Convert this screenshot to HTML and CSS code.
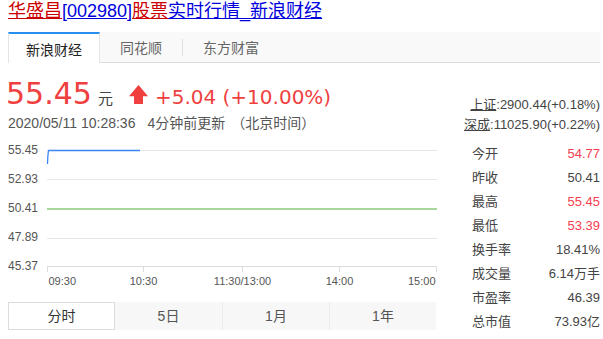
FILE: index.html
```html
<!DOCTYPE html>
<html lang="zh-CN">
<head>
<meta charset="utf-8">
<title>华盛昌[002980]股票实时行情_新浪财经</title>
<link rel="stylesheet" href="styles.css">
</head>
<body>
<h1 class="title"><a class="t-red" href="#">华盛昌</a><a class="t-blue" href="#">[002980]</a><a class="t-red" href="#">股票</a><a class="t-blue" href="#">实时行情_新浪财经</a></h1>

<nav class="src-tabs">
  <span class="src-tab active">新浪财经</span>
  <span class="src-tab">同花顺</span>
  <span class="src-sep"></span>
  <span class="src-tab">东方财富</span>
</nav>

<div class="main">
  <section class="left">
    <div class="price-row">
      <span class="price">55.45</span>
      <span class="unit">元</span>
      <svg class="arrow" width="19" height="19" viewBox="0 0 19 19"><path d="M9.5 0 L19 11.2 L14 11.2 L14 19 L5 19 L5 11.2 L0 11.2 Z" fill="#f03f3f"/></svg>
      <span class="change">+5.04 (+10.00%)</span>
    </div>
    <div class="time-row">
      <span>2020/05/11 10:28:36</span><span class="ago">4分钟前更新</span><span class="zone">（北京时间）</span>
    </div>

    <svg class="chart" width="429" height="155" viewBox="0 0 429 155">
      <g stroke="#e8e8e8" stroke-width="1">
        <line x1="39" y1="13.5" x2="429" y2="13.5"/>
        <line x1="39" y1="42.5" x2="429" y2="42.5"/>
        <line x1="39" y1="101.5" x2="429" y2="101.5"/>
      </g>
      <line x1="39" y1="72" x2="429" y2="72" stroke="#a8d89c" stroke-width="2"/>
      <g stroke="#dcdcdc" stroke-width="1">
        <line x1="39" y1="129.5" x2="429" y2="129.5"/>
        <line x1="39.5" y1="129.5" x2="39.5" y2="135"/>
        <line x1="135.5" y1="129.5" x2="135.5" y2="135"/>
        <line x1="234.5" y1="129.5" x2="234.5" y2="135"/>
        <line x1="331.5" y1="129.5" x2="331.5" y2="135"/>
        <line x1="428.5" y1="129.5" x2="428.5" y2="135"/>
      </g>
      <path d="M39.5 27 L39.8 20 L40.5 13.5 L132 13.5" fill="none" stroke="#3a86f5" stroke-width="1.3"/>
      <g class="ylab">
        <text x="0" y="16.5">55.45</text>
        <text x="0" y="45.5">52.93</text>
        <text x="0" y="74.5">50.41</text>
        <text x="0" y="103.5">47.89</text>
        <text x="0" y="132.5">45.37</text>
      </g>
      <g class="xlab">
        <text x="40.5" y="148">09:30</text>
        <text x="135.5" y="148" text-anchor="middle">10:30</text>
        <text x="234.5" y="148" text-anchor="middle">11:30/13:00</text>
        <text x="331.5" y="148" text-anchor="middle">14:00</text>
        <text x="427.5" y="148" text-anchor="end">15:00</text>
      </g>
    </svg>

    <div class="periods">
      <span class="period active">分时</span>
      <span class="period">5日</span>
      <span class="period">1月</span>
      <span class="period">1年</span>
    </div>
  </section>

  <aside class="right">
    <div class="index-line"><a href="#">上证</a>:2900.44(+0.18%)</div>
    <div class="index-line"><a href="#">深成</a>:11025.90(+0.22%)</div>
    <ul class="stats">
      <li><span class="k">今开</span><span class="v up">54.77</span></li>
      <li><span class="k">昨收</span><span class="v">50.41</span></li>
      <li><span class="k">最高</span><span class="v up">55.45</span></li>
      <li><span class="k">最低</span><span class="v up">53.39</span></li>
      <li><span class="k">换手率</span><span class="v">18.41%</span></li>
      <li><span class="k">成交量</span><span class="v">6.14万手</span></li>
      <li><span class="k">市盈率</span><span class="v">46.39</span></li>
      <li><span class="k">总市值</span><span class="v">73.93亿</span></li>
    </ul>
  </aside>
</div>
</body>
</html>
```

FILE: styles.css
```css
html, body {
  margin: 0;
  background: #fff;
}
body {
  padding: 0 3px 0 8px;
  font-family: "Liberation Sans", Arial, "Noto Sans CJK SC", sans-serif;
  color: #333;
}

.title {
  margin: 0;
  font-size: 18px;
  font-weight: normal;
  line-height: 22px;
}
.title a { text-decoration: underline; }
.t-red { color: #cc0000; }
.t-blue { color: #0000dd; }

.src-tabs {
  display: flex;
  margin-top: 10px;
  height: 30px;
  background: #f9f9f9;
  border-bottom: 1px solid #dcdcdc;
}
.src-tab {
  display: flex;
  align-items: center;
  padding: 0 20px;
  font-size: 14px;
  color: #666;
}
.src-tab.active {
  padding: 0 17px;
  margin-bottom: -1px;
  background: #fff;
  color: #222;
  border-top: 2px solid #2990f0;
  border-left: 1px solid #e4e4e4;
  border-right: 1px solid #e4e4e4;
}
.src-sep {
  align-self: center;
  width: 1px;
  height: 17px;
  background: #e0e0e0;
}

.main {
  display: flex;
}
.left {
  width: 429px;
  flex: none;
}
.right {
  flex: 1;
  padding-top: 32px;
}

.price-row {
  display: flex;
  align-items: baseline;
  margin-top: 13px;
  height: 36px;
}
.price {
  font-family: "DejaVu Sans", sans-serif;
  font-size: 30px;
  line-height: 36px;
  color: #f03f3f;
  margin-left: -2px;
}
.unit {
  font-size: 15px;
  color: #444;
  margin-left: 6px;
}
.arrow {
  align-self: center;
  margin-left: 16px;
  display: block;
}
.change {
  font-family: "DejaVu Sans", sans-serif;
  font-size: 20px;
  color: #f03f3f;
  margin-left: 7px;
}

.time-row {
  margin-top: 1px;
  font-size: 14px;
  line-height: 20px;
  color: #555;
}
.ago { margin-left: 12px; }
.zone { margin-left: 6px; }

.chart {
  display: block;
  margin-top: 4px;
}
.ylab text {
  font-family: "Liberation Sans", Arial, sans-serif;
  font-size: 12px;
  fill: #555;
}
.xlab text {
  font-family: "Liberation Sans", Arial, sans-serif;
  font-size: 11px;
  fill: #555;
}

.periods {
  display: grid;
  grid-template-columns: repeat(4, 1fr);
  width: 428px;
  height: 28px;
  margin-top: 10px;
  background: #f7f7f7;
}
.period {
  text-align: center;
  font-size: 14px;
  line-height: 28px;
  color: #555;
}
.period + .period + .period {
  border-left: 1px solid #ececec;
}
.period.active {
  background: #fff;
  color: #333;
  border: 1px solid #dcdcdc;
  line-height: 26px;
}

.index-line {
  text-align: right;
  font-size: 13px;
  line-height: 20px;
  color: #444;
}
.index-line a {
  color: #444;
  text-decoration: underline;
}

.stats {
  list-style: none;
  margin: 7px 0 0;
  padding: 0 0 0 35px;
}
.stats li {
  display: flex;
  justify-content: space-between;
  height: 24px;
  line-height: 24px;
  font-size: 13px;
}
.k { color: #444; }
.v { color: #444; }
.v.up { color: #f5404f; }
```
